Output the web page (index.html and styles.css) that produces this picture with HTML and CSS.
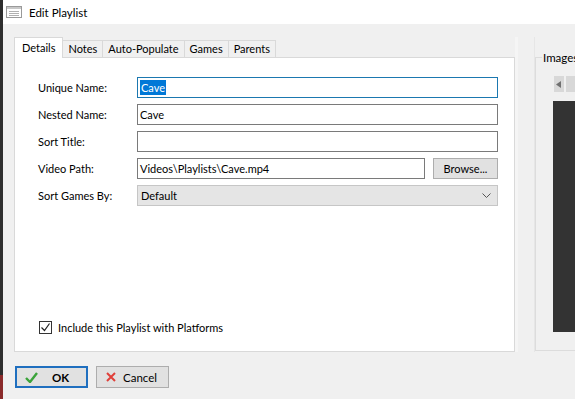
FILE: index.html
```html
<!DOCTYPE html>
<html lang="en">
  <head>
    <meta charset="UTF-8" />
    <title>Edit Playlist</title>
    <link rel="stylesheet" href="styles.css">
  </head>
  <body>
    <div class="edge"></div>
    <div class="window">
      <div class="titlebar">
        <svg class="app-icon" width="16" height="12" viewBox="0 0 16 12">
          <rect x="0.5" y="0.5" width="15" height="11" fill="#fff" stroke="#9a9a9a" />
          <rect x="1" y="1" width="14" height="2" fill="#c8c8c8" />
          <path d="M3 5.5h10M3 7.5h10M3 9.5h10" stroke="#b0b0b0" />
        </svg>
        <span class="title">Edit Playlist</span>
      </div>
      <div class="client">
        <div class="main">
          <div class="tabs-area">
            <div class="tabstrip">
              <div class="tab active">Details</div>
              <div class="tab">Notes</div>
              <div class="tab">Auto-Populate</div>
              <div class="tab">Games</div>
              <div class="tab">Parents</div>
            </div>
            <div class="panel">
              <div class="form">
                <label>Unique Name:</label>
                <div class="input focus"><span class="selected">Cave</span></div>

                <label>Nested Name:</label>
                <div class="input">Cave</div>

                <label>Sort Title:</label>
                <div class="input"></div>

                <label>Video Path:</label>
                <div class="path-row">
                  <div class="input">Videos\Playlists\Cave.mp4</div>
                  <button class="btn browse">Browse...</button>
                </div>

                <label>Sort Games By:</label>
                <div class="select">
                  <span>Default</span>
                  <svg width="9" height="5" viewBox="0 0 9 5"><path d="M0.5 0.5l4 4 4-4" fill="none" stroke="#555" /></svg>
                </div>
              </div>
              <div class="check">
                <span class="box">
                  <svg width="11" height="11" viewBox="0 0 11 11"><path d="M1.5 5.5l3 3 5-7" fill="none" stroke="#222" stroke-width="1.2" /></svg>
                </span>
                <span>Include this Playlist with Platforms</span>
              </div>
            </div>
          </div>
          <div class="splitter"></div>
          <fieldset class="group">
            <legend>Images</legend>
            <div class="nav">
              <span class="nav-btn">
                <svg width="6" height="7" viewBox="0 0 6 7"><path d="M5 0v7L0 3.5z" fill="#707070" /></svg>
              </span>
              <span class="nav-btn"></span>
            </div>
            <div class="preview"></div>
          </fieldset>
        </div>
        <div class="footer">
          <button class="btn default">
            <svg width="13" height="11" viewBox="0 0 13 11"><path d="M1 6l4 4 7-9" fill="none" stroke="#3aa33a" stroke-width="2.4" /></svg>
            <b>OK</b>
          </button>
          <button class="btn">
            <svg width="10" height="10" viewBox="0 0 10 10"><path d="M1 1l8 8M9 1l-8 8" stroke="#e0403a" stroke-width="2" /></svg>
            <span>Cancel</span>
          </button>
        </div>
      </div>
    </div>
  </body>
</html>
```

FILE: styles.css
```css
body {
  margin: 0;
  height: 399px;
  display: flex;
  overflow: hidden;
  background: #f0f0f0;
  font-family: Lato, "Noto Sans", sans-serif;
  font-size: 11px;
  color: #000;
}
.edge {
  flex: none;
  width: 3px;
  background: linear-gradient(#2e2e2e 0, #2e2e2e 375px, #8a2a2a 375px);
}
.window {
  flex: 1;
  min-width: 0;
  display: flex;
  flex-direction: column;
}
.titlebar {
  height: 24px;
  background: #fff;
  display: flex;
  align-items: center;
  gap: 7px;
  padding-left: 3px;
}
.title {
  font-size: 11.5px;
}
.client {
  flex: 1;
  padding: 13px 0 0 11px;
}
.main {
  display: flex;
  height: 315px;
}
.tabs-area {
  flex: none;
  width: 501px;
  display: flex;
  flex-direction: column;
}
.tabstrip {
  display: flex;
  align-items: flex-end;
  height: 20px;
}
.tab {
  height: 17px;
  line-height: 16px;
  padding: 0 5px;
  border: 1px solid #d9d9d9;
  border-bottom: none;
  margin-left: -1px;
  background: #f0f0f0;
  box-sizing: border-box;
}
.tab.active {
  position: relative;
  z-index: 1;
  height: 21px;
  line-height: 19px;
  margin: 0 0 -1px 0;
  background: #fff;
  padding: 0 7px;
}
.panel {
  flex: 1;
  background: #fff;
  border: 1px solid #d9d9d9;
  display: flex;
  flex-direction: column;
  padding: 19px 16px 18px 23px;
}
.form {
  display: grid;
  grid-template-columns: 99px 1fr;
  grid-auto-rows: 21px;
  row-gap: 6px;
  align-items: center;
}
.input {
  box-sizing: border-box;
  height: 21px;
  border: 1px solid #7a7a7a;
  line-height: 19px;
  padding-left: 2px;
  background: #fff;
  white-space: nowrap;
}
.input.focus {
  border-color: #1b78b0;
}
.selected {
  background: #0078d7;
  color: #fff;
  padding: 1px 1px;
}
.path-row {
  display: flex;
  gap: 8px;
}
.path-row .input {
  flex: 1;
}
.btn {
  box-sizing: border-box;
  height: 21px;
  border: 1px solid #adadad;
  background: #e1e1e1;
  font-family: inherit;
  font-size: 11px;
  padding: 0;
  display: flex;
  align-items: center;
  gap: 7px;
}
.browse {
  width: 65px;
  justify-content: center;
}
.select {
  box-sizing: border-box;
  height: 21px;
  border: 1px solid #c6c6c6;
  background: #e5e5e5;
  display: flex;
  align-items: center;
  justify-content: space-between;
  padding: 0 6px 0 3px;
}
.check {
  margin-top: auto;
  display: flex;
  align-items: center;
  gap: 6px;
  padding-left: 1px;
  margin-bottom: -1px;
}
.box {
  box-sizing: border-box;
  width: 13px;
  height: 13px;
  border: 1px solid #333;
  display: flex;
  align-items: center;
  justify-content: center;
}
.splitter {
  flex: none;
  width: 20px;
  box-sizing: border-box;
  border-left: 3px solid #f5f5f5;
  border-right: 1px solid #e6e6e6;
}
.group {
  flex: 1;
  min-width: 0;
  margin: 13px 0 1px 0;
  padding: 11px 0 0 18px;
  border: 1px solid #dcdcdc;
  border-right: none;
}
.group legend {
  padding: 0 1px;
  margin-left: -12px;
  line-height: 15px;
  font-size: 11.5px;
}
.nav {
  display: flex;
  gap: 2px;
}
.nav-btn {
  width: 17px;
  height: 16px;
  background: #d8d8d8;
  display: flex;
  align-items: center;
  justify-content: center;
}
.preview {
  margin: 9px 0 0 -1px;
  height: 231px;
  background: #333;
}
.footer {
  display: flex;
  gap: 8px;
  padding: 14px 0 0 1px;
}
.footer .btn {
  width: 73px;
  height: 22px;
  padding-left: 9px;
  font-size: 11.5px;
}
.footer .btn.default {
  border: 2px solid #1f6fbf;
  padding-left: 8px;
  gap: 14px;
}
```
